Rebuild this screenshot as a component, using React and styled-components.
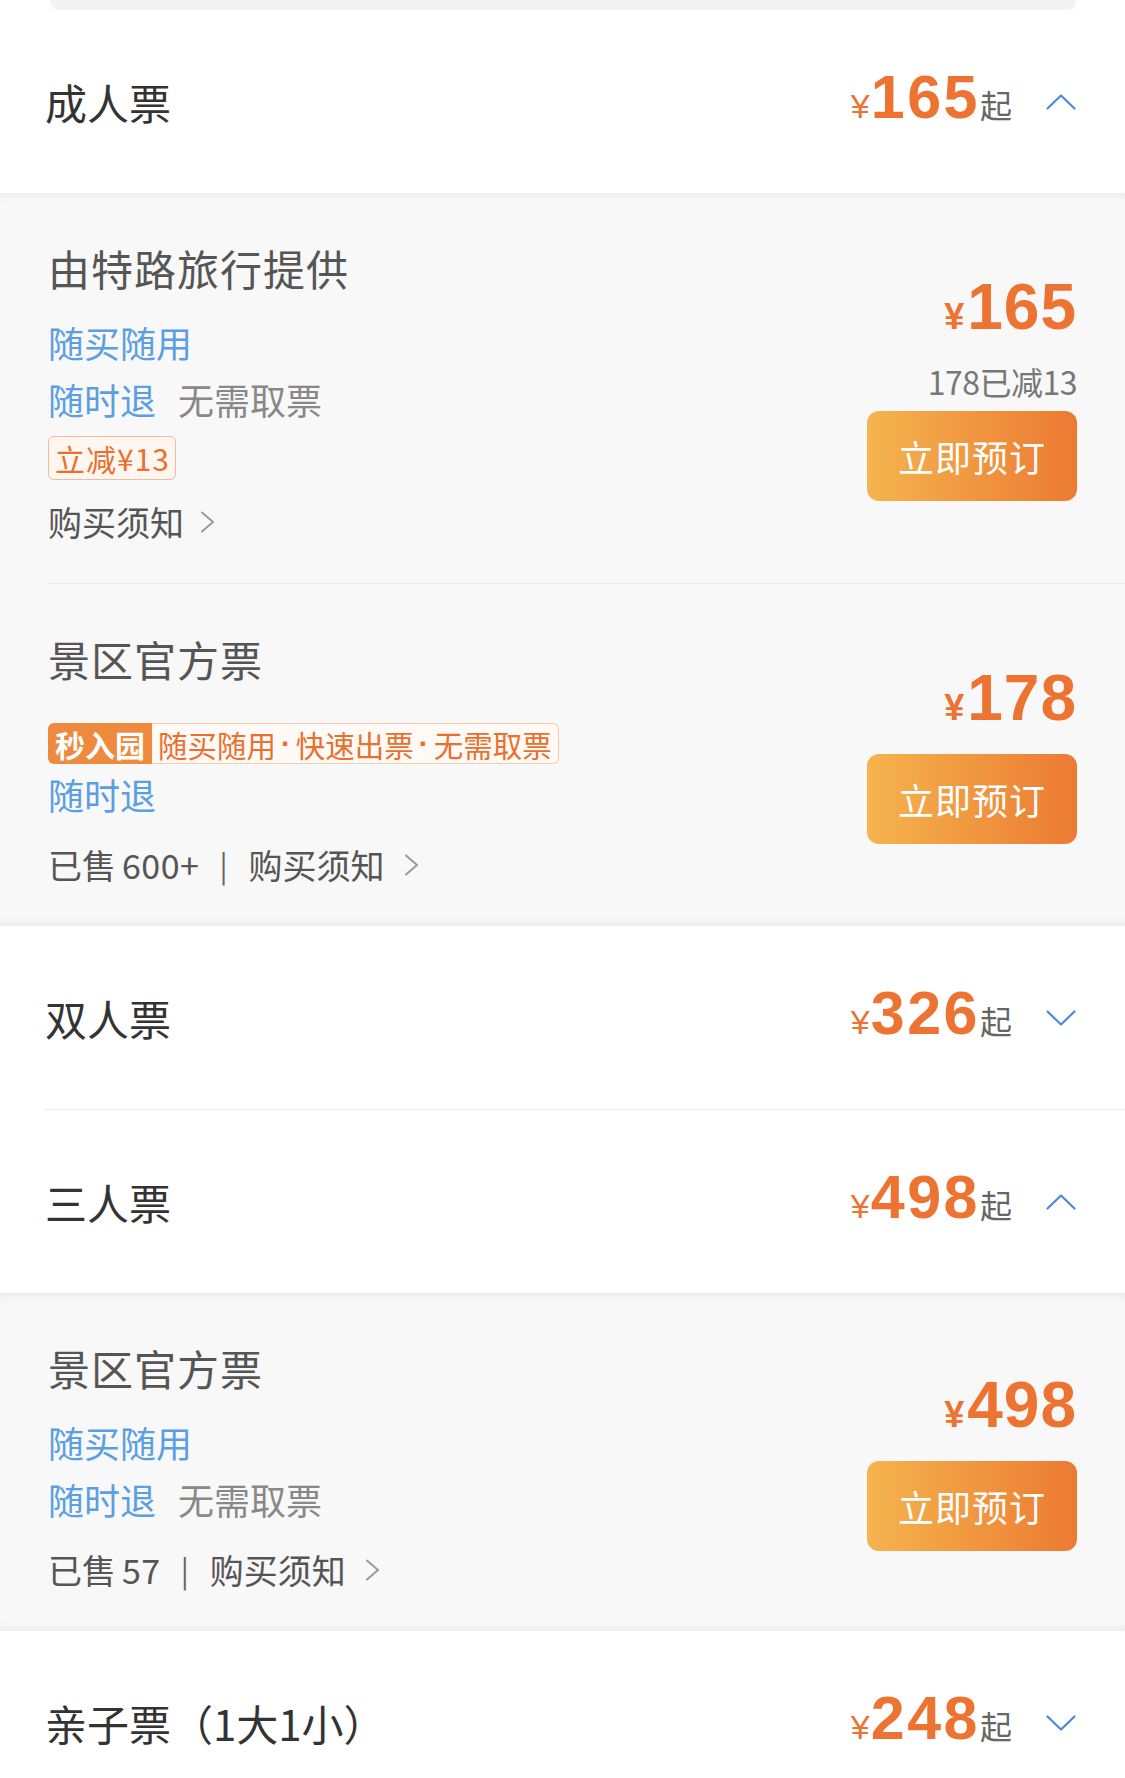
import React from "react";
import styled, { createGlobalStyle } from "styled-components";

const GlobalStyle = createGlobalStyle`
  html, body {
    margin: 0;
    padding: 0;
    background: #ffffff;
  }
  body {
    font-family: "Noto Sans CJK SC", "Noto Sans", sans-serif;
    -webkit-font-smoothing: antialiased;
  }
`;

const ORANGE = "#ec7331";
const BLUE = "#5a9fe4";

const Page = styled.div`
  width: 1125px;
  height: 1778px;
  overflow: hidden;
  background: #ffffff;
`;

const TopCard = styled.div`
  height: 10px;
  margin: 0 49px 0 50px;
  background: #f3f3f5;
  border-radius: 0 0 14px 14px;
  box-shadow: 0 2px 4px rgba(0, 0, 0, 0.03);
`;

const Header = styled.div`
  padding-left: 45px;
  background: #ffffff;
`;

const HeaderInner = styled.div`
  height: 183px;
  display: flex;
  align-items: center;
  justify-content: space-between;
  padding-right: 49px;
  border-bottom: ${(p) => (p.$open ? "none" : "1px solid #ececec")};
`;

const CategoryName = styled.div`
  font-size: 42px;
  color: #333333;
  line-height: 50px;
`;

const HeaderRight = styled.div`
  display: flex;
  align-items: center;
`;

const FromPrice = styled.div`
  display: flex;
  align-items: baseline;
  color: ${ORANGE};
  line-height: 64px;
`;

const Yen = styled.span`
  font-family: "Liberation Sans", "Noto Sans CJK SC", sans-serif;
  font-size: ${(p) => (p.$big ? "36px" : "34px")};
  font-weight: ${(p) => (p.$big ? 700 : 400)};
  margin-right: ${(p) => (p.$big ? "3px" : "1px")};
`;

const Amount = styled.span`
  font-family: "Liberation Sans", sans-serif;
  font-size: ${(p) => (p.$big ? "64px" : "61px")};
  font-weight: 700;
  letter-spacing: ${(p) => (p.$big ? "1px" : "2.5px")};
`;

const Qi = styled.span`
  font-size: 32px;
  color: #666666;
`;

const Toggle = styled.svg`
  width: 30px;
  height: 16px;
  margin-left: 34px;
  flex-shrink: 0;
`;

const Panel = styled.div`
  background: #f8f8f8;
  box-shadow: inset 0 10px 10px -8px rgba(0, 0, 0, 0.07),
    inset 0 -10px 10px -8px rgba(0, 0, 0, 0.07);
`;

const Offer = styled.div`
  margin-left: 48px;
  padding-right: 48px;
  display: flex;
  align-items: center;
  justify-content: space-between;

  & + & {
    border-top: 1px solid #e9e9e9;
  }
`;

const OfferInfo = styled.div`
  display: flex;
  flex-direction: column;
  align-items: flex-start;
  padding: 50px 0 33px;
`;

const OfferTitle = styled.div`
  font-size: 42px;
  line-height: 50px;
  color: #555555;
  letter-spacing: 1px;
  margin-bottom: 21px;
`;

const Line = styled.div`
  display: flex;
  gap: 22px;
  font-size: 36px;
  line-height: 57px;
`;

const Blue = styled.span`
  color: ${BLUE};
`;

const Grey = styled.span`
  color: #888888;
`;

const DiscountTag = styled.div`
  display: inline-flex;
  align-items: center;
  box-sizing: border-box;
  height: 44px;
  margin-top: 8px;
  padding: 0 5px 0 6px;
  border: 1px solid #f2bc98;
  border-radius: 6px;
  background: #fff6f0;
  color: #e9702e;
  font-size: 30px;
  letter-spacing: 1px;
`;

const PromoTag = styled.div`
  display: inline-flex;
  height: 41px;
  margin: 18px 0 2px;
`;

const PromoBadge = styled.span`
  display: flex;
  align-items: center;
  padding: 0 7px;
  background: #ed8a3d;
  color: #ffffff;
  font-size: 30px;
  font-weight: 700;
  border-radius: 6px 0 0 6px;
`;

const PromoText = styled.span`
  display: flex;
  align-items: center;
  box-sizing: border-box;
  padding: 0 6px;
  border: 1px solid #f6ccae;
  border-left: none;
  border-radius: 0 6px 6px 0;
  background: #fffaf6;
  color: #e9702e;
  font-size: 29.5px;
`;

const Dot = styled.span`
  font-family: "Liberation Sans", sans-serif;
  font-weight: 700;
  margin: 0 5px;
`;

const Footer = styled.div`
  display: flex;
  align-items: center;
  margin-top: 13px;
  font-size: 34px;
  line-height: 57px;
  color: #555555;
`;

const Sold = styled.span`
  display: flex;
  gap: 6px;
`;

const SoldCount = styled.span`
  letter-spacing: 0.5px;
`;

const Sep = styled.span`
  margin: 0 21px 0 20px;
  font-size: 30px;
  color: #666666;
`;

const Notice = styled.span`
  display: flex;
  align-items: center;
`;

const NoticeArrow = styled.svg`
  width: 15px;
  height: 22px;
  margin-left: ${(p) => (p.$gap ? p.$gap : 16)}px;
`;

const OfferSide = styled.div`
  display: flex;
  flex-direction: column;
  align-items: flex-end;
  flex-shrink: 0;
`;

const WasPrice = styled.div`
  margin-top: 12px;
  font-size: 32px;
  line-height: 40px;
  color: #777777;
  letter-spacing: -0.5px;
`;

const BookButton = styled.button`
  width: 210px;
  height: 90px;
  margin-top: ${(p) => (p.$afterNote ? "10px" : "14px")};
  border: none;
  border-radius: 12px;
  background: linear-gradient(90deg, #f5b44d 0%, #ec7a33 100%);
  color: #ffffff;
  font-family: inherit;
  font-size: 36px;
  letter-spacing: 1px;
  display: flex;
  align-items: center;
  justify-content: center;
  padding: 0;
`;

function Chevron({ up }) {
  return (
    <Toggle viewBox="0 0 30 16">
      <polyline
        points={up ? "1.5,14.5 15,1.5 28.5,14.5" : "1.5,1.5 15,14.5 28.5,1.5"}
        fill="none"
        stroke="#4a89dc"
        strokeWidth="2.2"
        strokeLinecap="round"
        strokeLinejoin="round"
      />
    </Toggle>
  );
}

function NoticeLink({ gap }) {
  return (
    <Notice>
      购买须知
      <NoticeArrow viewBox="0 0 15 22" $gap={gap}>
        <polyline
          points="2,1.5 13,11 2,20.5"
          fill="none"
          stroke="#9a9a9a"
          strokeWidth="2"
          strokeLinecap="round"
          strokeLinejoin="round"
        />
      </NoticeArrow>
    </Notice>
  );
}

function CategoryHeader({ name, from, open }) {
  return (
    <Header>
      <HeaderInner $open={open}>
        <CategoryName>{name}</CategoryName>
        <HeaderRight>
          <FromPrice>
            <Yen>¥</Yen>
            <Amount>{from}</Amount>
            <Qi>起</Qi>
          </FromPrice>
          <Chevron up={open} />
        </HeaderRight>
      </HeaderInner>
    </Header>
  );
}

function OfferPrice({ value, was }) {
  return (
    <OfferSide>
      <FromPrice>
        <Yen $big>¥</Yen>
        <Amount $big>{value}</Amount>
      </FromPrice>
      {was && <WasPrice>{was}</WasPrice>}
      <BookButton $afterNote={!!was}>立即预订</BookButton>
    </OfferSide>
  );
}

function SoldFooter({ count }) {
  return (
    <Footer>
      <Sold>
        已售<SoldCount>{count}</SoldCount>
      </Sold>
      <Sep>|</Sep>
      <NoticeLink gap={19} />
    </Footer>
  );
}

export default function App() {
  return (
    <Page>
      <GlobalStyle />
      <TopCard />

      <CategoryHeader name="成人票" from="165" open />
      <Panel>
        <Offer>
          <OfferInfo>
            <OfferTitle>由特路旅行提供</OfferTitle>
            <Line>
              <Blue>随买随用</Blue>
            </Line>
            <Line>
              <Blue>随时退</Blue>
              <Grey>无需取票</Grey>
            </Line>
            <DiscountTag>立减¥13</DiscountTag>
            <Footer>
              <NoticeLink />
            </Footer>
          </OfferInfo>
          <OfferPrice value="165" was="178已减13" />
        </Offer>
        <Offer>
          <OfferInfo>
            <OfferTitle>景区官方票</OfferTitle>
            <PromoTag>
              <PromoBadge>秒入园</PromoBadge>
              <PromoText>
                随买随用<Dot>·</Dot>快速出票<Dot>·</Dot>无需取票
              </PromoText>
            </PromoTag>
            <Line>
              <Blue>随时退</Blue>
            </Line>
            <SoldFooter count="600+" />
          </OfferInfo>
          <OfferPrice value="178" />
        </Offer>
      </Panel>

      <CategoryHeader name="双人票" from="326" />
      <CategoryHeader name="三人票" from="498" open />
      <Panel>
        <Offer>
          <OfferInfo>
            <OfferTitle>景区官方票</OfferTitle>
            <Line>
              <Blue>随买随用</Blue>
            </Line>
            <Line>
              <Blue>随时退</Blue>
              <Grey>无需取票</Grey>
            </Line>
            <SoldFooter count="57" />
          </OfferInfo>
          <OfferPrice value="498" />
        </Offer>
      </Panel>

      <CategoryHeader name="亲子票（1大1小）" from="248" />
    </Page>
  );
}
